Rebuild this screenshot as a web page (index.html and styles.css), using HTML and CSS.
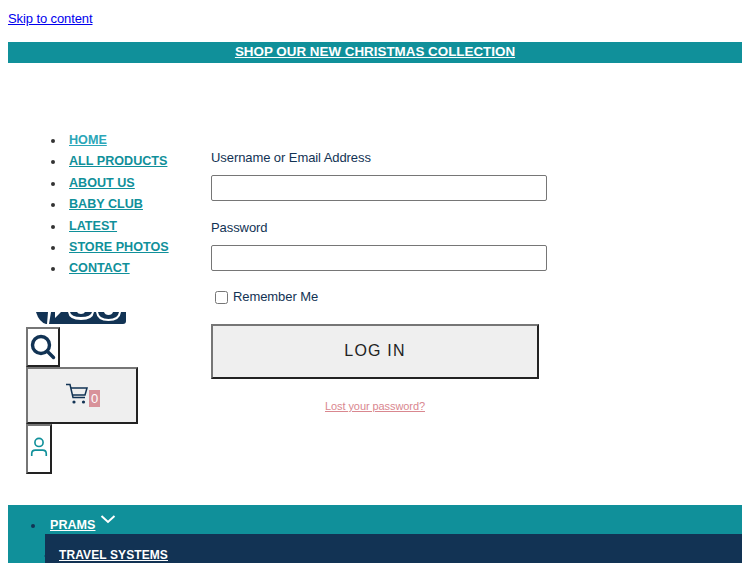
FILE: index.html
```html
<!DOCTYPE html>
<html lang="en">
<head>
    <meta charset="UTF-8">
    <meta name="viewport" content="width=device-width, initial-scale=1.0">
    <title>Log In</title>
    <link rel="stylesheet" href="styles.css">
</head>
<body>
    <a class="skip-link" href="#content">Skip to content</a>
    <div class="promo-bar"><a href="#">SHOP OUR NEW CHRISTMAS COLLECTION</a></div>
    <div class="main-row">
        <div class="side-col">
            <ul class="side-nav">
                <li><a class="current" href="#">HOME</a></li>
                <li><a href="#">ALL PRODUCTS</a></li>
                <li><a href="#">ABOUT US</a></li>
                <li><a href="#">BABY CLUB</a></li>
                <li><a href="#">LATEST</a></li>
                <li><a href="#">STORE PHOTOS</a></li>
                <li><a href="#">CONTACT</a></li>
            </ul>
            <div class="social-strip">
                <svg width="90" height="12" viewBox="0 0 90 12">
                    <path d="M0 0h90v9q0 3-3 3H10Q3 10 0 0z" fill="#123354"/>
                    <path d="M12 0h3l-2 12h-2zM19 0h6l-6 6z" fill="#fff"/>
                    <path d="M32 0h2q1 5 11 5t11-5h2q-1 8-13 8T32 0z" fill="#fff"/>
                    <path d="M41 0h8q-1 2-4 2t-4-2z" fill="#fff"/>
                    <path d="M60 0h2q1 7 10.500 7T83 0h2q-1 9-12.500 9T60 0z" fill="#fff"/>
                    <path d="M68 0h9q-1 3-4.500 3T68 0z" fill="#fff"/>
                </svg>
            </div>
            <button class="icon-btn search-btn" type="button" aria-label="Search">
                <svg width="28" height="28" viewBox="0 0 28 28" fill="none" stroke="#123354">
                    <circle cx="12" cy="12" r="8.5" stroke-width="3.4"/>
                    <path d="M18.5 18.5l6 6" stroke-width="3.4" stroke-linecap="round"/>
                </svg>
            </button>
            <button class="icon-btn cart-btn" type="button" aria-label="Cart">
                <svg class="cart-icon" width="24" height="22" viewBox="0 0 24 22" fill="none" stroke="#123354" stroke-width="1.5">
                    <path d="M1 1.5h4l3 13h12"/>
                    <path d="M6 5h16l-2 7H7.5"/>
                    <circle cx="9" cy="19" r="1.6" fill="#123354" stroke="none"/>
                    <circle cx="18.500" cy="19" r="1.600" fill="#123354" stroke="none"/>
                </svg>
                <span class="cart-count">0</span>
            </button>
            <button class="icon-btn account-btn" type="button" aria-label="Account">
                <svg class="account-icon" width="18" height="20" viewBox="0 0 18 22" fill="none" stroke="#10909a" stroke-width="1.8">
                    <circle cx="9" cy="6" r="4.500"/>
                    <path d="M1 21v-2.500q0-4 4-4h8q4 0 4 4V21"/>
                </svg>
            </button>
        </div>
        <form class="login-form">
            <div class="form-group">
                <label for="user_login">Username or Email Address</label>
                <input type="text" id="user_login" name="log">
            </div>
            <div class="form-group">
                <label for="user_pass">Password</label>
                <input type="password" id="user_pass" name="pwd">
            </div>
            <label class="remember"><input type="checkbox" name="rememberme"> Remember Me</label>
            <button class="login-btn" type="button">LOG IN</button>
            <a class="lost-link" href="#">Lost your password?</a>
        </form>
    </div>
    <nav class="shop-nav">
        <ul class="shop-list">
            <li>
                <a href="#">PRAMS</a>
                <svg class="chevron" width="16" height="9" viewBox="0 0 16 9" fill="none" stroke="#fff" stroke-width="2">
                    <path d="M1.500 1L8 7l6.500-6"/>
                </svg>
                <ul class="shop-sub">
                    <li><a href="#">TRAVEL SYSTEMS</a></li>
                </ul>
            </li>
        </ul>
    </nav>
</body>
</html>
```

FILE: styles.css
```css
html {
    height: 563px;
    overflow: hidden;
}
body {
    font-family: "Liberation Sans", Arial, sans-serif;
    color: #123354;
    background-color: #fff;
    margin: 8px;
}
.skip-link {
    display: block;
    font-size: 13px;
    letter-spacing: -0.1px;
    line-height: 21px;
    color: #0000ee;
}
.promo-bar {
    margin-top: 13px;
    height: 21px;
    line-height: 20px;
    background-color: #10909a;
    text-align: center;
    font-size: 13.400px;
    font-weight: bold;
}
.promo-bar a {
    color: #fff;
}
.main-row {
    display: flex;
    margin-top: 66px;
}
.side-col {
    width: 203px;
    flex-shrink: 0;
}
.side-nav {
    margin: 0;
    padding: 1px 0 0 57px;
    height: 182px;
    font-size: 12.600px;
    font-weight: bold;
    line-height: 21.4px;
    color: #333;
}
.side-nav li {
    padding-left: 4px;
}
.side-nav a {
    color: #10909a;
}
.side-nav a.current {
    color: #2ba6b8;
}
.social-strip {
    margin-left: 28px;
    height: 12px;
}
.social-strip svg {
    display: block;
}
.icon-btn {
    display: flex;
    align-items: center;
    justify-content: center;
    margin-left: 18px;
    padding: 0;
    border: 2px solid;
    border-color: #767676 #222 #222 #767676;
}
.search-btn {
    margin-top: 3px;
    width: 34px;
    height: 40px;
    background-color: #fff;
}
.cart-btn {
    width: 112px;
    height: 57px;
    background-color: #efefef;
}
.cart-icon {
    margin: 0 0 4px 1px;
}
.cart-count {
    font-size: 13px;
    line-height: 17px;
    padding: 0 1.5px;
    margin-top: 5px;
    color: #fff;
    background-color: #d8929a;
}
.account-btn {
    width: 26px;
    height: 50px;
    background-color: #fff;
}
.account-icon {
    margin-bottom: 4px;
}
.login-form {
    width: 336px;
    margin-top: 21px;
    font-size: 13px;
    letter-spacing: -0.08px;
}
.form-group {
    margin-bottom: 19px;
}
.form-group label {
    display: block;
    line-height: 16px;
    margin-bottom: 9px;
}
.form-group input {
    display: block;
    box-sizing: border-box;
    width: 100%;
    height: 26px;
    padding: 2px 6px;
    border: 1px solid #767676;
    border-radius: 2px;
    background-color: #fff;
}
.remember {
    display: flex;
    align-items: center;
    gap: 5px;
    margin: -1px 0 0 4px;
    line-height: 16px;
}
.remember input {
    margin: 0;
    width: 13px;
    height: 13px;
}
.login-btn {
    display: block;
    box-sizing: border-box;
    width: 328px;
    height: 55px;
    margin-top: 19px;
    padding-bottom: 3px;
    border: 2px solid;
    border-color: #767676 #222 #222 #767676;
    background-color: #efefef;
    color: #222;
    font-family: "Liberation Sans", Arial, sans-serif;
    font-size: 16px;
    letter-spacing: 1.2px;
}
.lost-link {
    display: block;
    width: 328px;
    margin-top: 21px;
    text-align: center;
    font-size: 11px;
    letter-spacing: -0.08px;
    color: #d9878f;
}
.shop-nav {
    margin-top: 31px;
    height: 58px;
    overflow: hidden;
    background-color: #10909a;
}
.shop-list {
    margin: 0;
    padding: 10px 0 0 37px;
    font-size: 12.600px;
    font-weight: bold;
    color: #123354;
}
.shop-list > li {
    padding-left: 5px;
    line-height: 19px;
}
.shop-list a {
    color: #fff;
}
.chevron {
    margin-left: 1px;
    vertical-align: 5px;
}
.shop-sub {
    margin: -1px 0 0 -5px;
    padding: 12px 0 14px 14px;
    background-color: #123354;
    font-size: 12px;
    letter-spacing: 0.1px;
}
```
